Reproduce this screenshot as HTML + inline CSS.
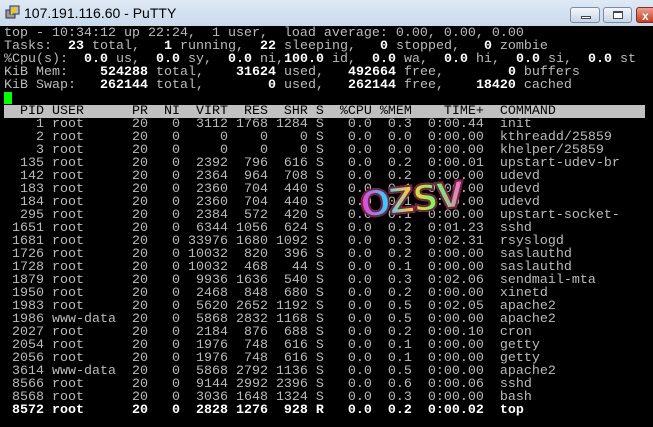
<!DOCTYPE html>
<html><head><meta charset="utf-8"><style>
*{margin:0;padding:0;box-sizing:border-box}
body{width:653px;height:427px;overflow:hidden;background:#000;position:relative;font-family:"Liberation Mono",monospace}
#title{position:absolute;left:0;top:0;width:653px;height:26px;background:linear-gradient(#dfe9f5,#c9d9ec);}
#title .t{position:absolute;left:24px;top:5px;font:14px "Liberation Sans",sans-serif;color:#000}
#icon{position:absolute;left:5px;top:5px;width:15px;height:15px}
.btn{position:absolute;top:7px;height:16px;border:1px solid #7a8ba3;border-radius:3px;background:linear-gradient(#f2f6fb,#c8d5e6)}
#term{position:absolute;left:4px;top:27px;color:#bbb;font-size:13.33px;line-height:13px;white-space:pre}
b{color:#fff;font-weight:bold}
.hd{background:#c0c0c0;color:#000;display:inline-block;width:641px}
#cur{position:absolute;left:4px;top:92px;width:8px;height:12px;background:#00ff00}
#wm{position:absolute;left:360px;top:180px;font:bold 36px "DejaVu Sans",sans-serif;letter-spacing:-2px;transform:rotate(-6deg);
background:linear-gradient(90deg,#f3c,#3cf,#fc3,#6f6,#f6c);-webkit-background-clip:text;color:transparent;-webkit-text-stroke:2px #724;}
</style></head><body>
<div id="title">
<svg id="icon" viewBox="0 0 15 15"><rect x="1" y="5" width="9" height="8" fill="#99a" stroke="#333" stroke-width="1"/><rect x="5" y="1" width="9" height="8" fill="#bbc" stroke="#333" stroke-width="1"/><path d="M6 9 L10 5 L8 5 L11 2" stroke="#ec0" stroke-width="2" fill="none"/></svg>
<div class="t">107.191.116.60 - PuTTY</div>
<div class="btn" style="left:570px;width:30px"><div style="position:absolute;left:10px;top:8px;width:10px;height:3px;border:1px solid #445;background:#fff"></div></div>
<div class="btn" style="left:603px;width:29px"><div style="position:absolute;left:9px;top:3px;width:10px;height:8px;border:1px solid #445;border-top-width:2px;background:#fff"></div></div>
<div class="btn" style="left:636px;width:20px;background:linear-gradient(#e8a090,#c43b25);border-color:#8a2a1a"><div style="position:absolute;left:5px;top:1px;color:#fff;font:bold 12px 'Liberation Sans',sans-serif">x</div></div>
</div>
<div id="term">top - 10:34:12 up 22:24,  1 user,  load average: 0.00, 0.00, 0.00
Tasks:  <b>23</b> total,   <b>1</b> running,  <b>22</b> sleeping,   <b>0</b> stopped,   <b>0</b> zombie
%Cpu(s):  <b>0.0</b> us,  <b>0.0</b> sy,  <b>0.0</b> ni,<b>100.0</b> id,  <b>0.0</b> wa,  <b>0.0</b> hi,  <b>0.0</b> si,  <b>0.0</b> st
KiB Mem:    <b>524288</b> total,    <b>31624</b> used,   <b>492664</b> free,        <b>0</b> buffers
KiB Swap:   <b>262144</b> total,        <b>0</b> used,   <b>262144</b> free,    <b>18420</b> cached

<span class="hd">  PID USER      PR  NI  VIRT  RES  SHR S  %CPU %MEM    TIME+  COMMAND</span>
    1 root      20   0  3112 1768 1284 S   0.0  0.3  0:00.44  init
    2 root      20   0     0    0    0 S   0.0  0.0  0:00.00  kthreadd/25859
    3 root      20   0     0    0    0 S   0.0  0.0  0:00.00  khelper/25859
  135 root      20   0  2392  796  616 S   0.0  0.2  0:00.01  upstart-udev-br
  142 root      20   0  2364  964  708 S   0.0  0.2  0:00.00  udevd
  183 root      20   0  2360  704  440 S   0.0  0.1  0:00.00  udevd
  184 root      20   0  2360  704  440 S   0.0  0.1  0:00.00  udevd
  295 root      20   0  2384  572  420 S   0.0  0.1  0:00.00  upstart-socket-
 1651 root      20   0  6344 1056  624 S   0.0  0.2  0:01.23  sshd
 1681 root      20   0 33976 1680 1092 S   0.0  0.3  0:02.31  rsyslogd
 1726 root      20   0 10032  820  396 S   0.0  0.2  0:00.00  saslauthd
 1728 root      20   0 10032  468   44 S   0.0  0.1  0:00.00  saslauthd
 1879 root      20   0  9936 1636  540 S   0.0  0.3  0:02.06  sendmail-mta
 1950 root      20   0  2468  848  680 S   0.0  0.2  0:00.00  xinetd
 1983 root      20   0  5620 2652 1192 S   0.0  0.5  0:02.05  apache2
 1986 www-data  20   0  5868 2832 1168 S   0.0  0.5  0:00.00  apache2
 2027 root      20   0  2184  876  688 S   0.0  0.2  0:00.10  cron
 2054 root      20   0  1976  748  616 S   0.0  0.1  0:00.00  getty
 2056 root      20   0  1976  748  616 S   0.0  0.1  0:00.00  getty
 3614 www-data  20   0  5868 2792 1136 S   0.0  0.5  0:00.00  apache2
 8566 root      20   0  9144 2992 2396 S   0.0  0.6  0:00.06  sshd
 8568 root      20   0  3036 1648 1324 S   0.0  0.3  0:00.00  bash
<b> 8572 root      20   0  2828 1276  928 R   0.0  0.2  0:00.02  top</b></div>
<div id="cur"></div>
<div id="wm">OZSV</div>
</body></html>
